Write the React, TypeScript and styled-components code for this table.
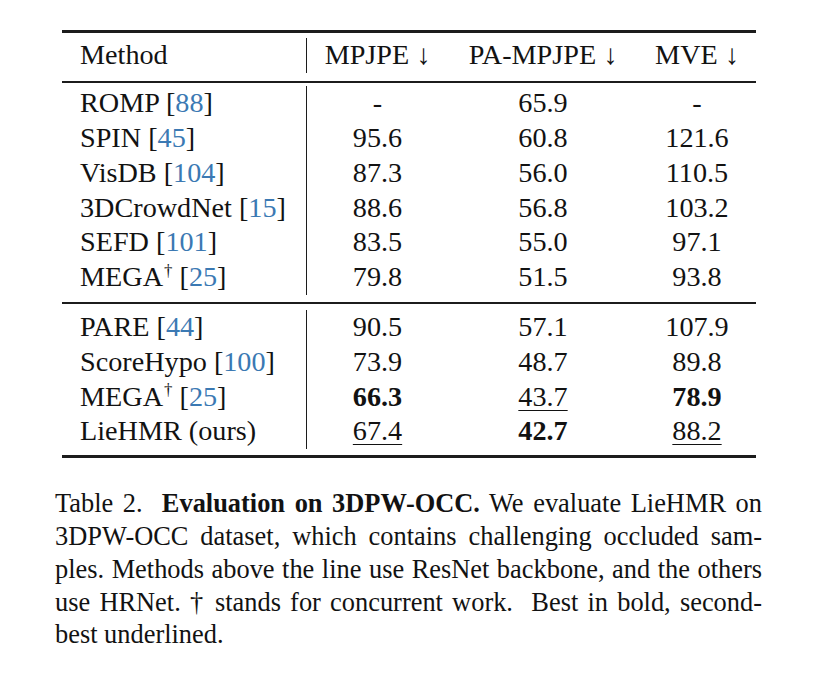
import React from "react";
import styled, { createGlobalStyle } from "styled-components";

const serif = `"Liberation Serif", "Times New Roman", Times, "DejaVu Serif", serif`;

const Global = createGlobalStyle`
  html, body { margin: 0; padding: 0; background: #ffffff; }
  body { font-family: ${serif}; color: #121212; }
`;

const Page = styled.div`
  width: 824px;
  height: 681px;
  padding-top: 30px;
  box-sizing: border-box;
  display: flex;
  flex-direction: column;
  font-family: ${serif};
`;

const Table = styled.div`
  margin-left: 62px;
  width: 694px;
  display: flex;
  flex-direction: column;
  font-size: 28.2px;
  line-height: 34.8px;
`;

const Rule = styled.div<{ $weight: number }>`
  height: ${(p) => p.$weight}px;
  background: #1c1c1c;
`;

const Section = styled.div<{ $top: number; $bottom: number }>`
  padding-top: ${(p) => p.$top}px;
  padding-bottom: ${(p) => p.$bottom}px;
`;

const Row = styled.div`
  display: grid;
  grid-template-columns: 244px 142px 190px 118px;
`;

const Cell = styled.div<{ $first?: boolean; $divider?: boolean }>`
  white-space: nowrap;
  text-align: ${(p) => (p.$first ? "left" : "center")};
  padding-left: ${(p) => (p.$first ? "18px" : "0")};
  border-left: ${(p) => (p.$divider ? "1.2px solid #1c1c1c" : "none")};
  box-sizing: border-box;
`;

const Cite = styled.span`
  color: #3b79b3;
`;

const Dagger = styled.sup`
  font-size: 0.6em;
  line-height: 0;
  vertical-align: 0.62em;
  margin-left: 1px;
`;

const Best = styled.span`
  font-weight: 700;
`;

const Second = styled.span`
  text-decoration: underline;
  text-decoration-thickness: 1.3px;
  text-underline-offset: 4px;
`;

const Caption = styled.div`
  margin-top: 29px;
  margin-left: 55px;
  width: 707px;
  font-size: 26.4px;
  line-height: 32.75px;
`;

const Line = styled.div<{ $last?: boolean }>`
  text-align: ${(p) => (p.$last ? "left" : "justify")};
  text-align-last: ${(p) => (p.$last ? "left" : "justify")};
  white-space: nowrap;
`;

const Strong = styled.b`
  font-weight: 700;
`;

type Val = { v: string; s?: "best" | "second" };
type RowData = { name: string; dagger?: boolean; cite: string; vals: Val[] };

const group1: RowData[] = [
  { name: "ROMP", cite: "88", vals: [{ v: "-" }, { v: "65.9" }, { v: "-" }] },
  { name: "SPIN", cite: "45", vals: [{ v: "95.6" }, { v: "60.8" }, { v: "121.6" }] },
  { name: "VisDB", cite: "104", vals: [{ v: "87.3" }, { v: "56.0" }, { v: "110.5" }] },
  { name: "3DCrowdNet", cite: "15", vals: [{ v: "88.6" }, { v: "56.8" }, { v: "103.2" }] },
  { name: "SEFD", cite: "101", vals: [{ v: "83.5" }, { v: "55.0" }, { v: "97.1" }] },
  { name: "MEGA", dagger: true, cite: "25", vals: [{ v: "79.8" }, { v: "51.5" }, { v: "93.8" }] },
];

const group2: RowData[] = [
  { name: "PARE", cite: "44", vals: [{ v: "90.5" }, { v: "57.1" }, { v: "107.9" }] },
  { name: "ScoreHypo", cite: "100", vals: [{ v: "73.9" }, { v: "48.7" }, { v: "89.8" }] },
  {
    name: "MEGA",
    dagger: true,
    cite: "25",
    vals: [{ v: "66.3", s: "best" }, { v: "43.7", s: "second" }, { v: "78.9", s: "best" }],
  },
  {
    name: "LieHMR (ours)",
    cite: "",
    vals: [{ v: "67.4", s: "second" }, { v: "42.7", s: "best" }, { v: "88.2", s: "second" }],
  },
];

const renderVal = (val: Val) => {
  if (val.s === "best") return <Best>{val.v}</Best>;
  if (val.s === "second") return <Second>{val.v}</Second>;
  return val.v;
};

const DataRow = ({ r }: { r: RowData }) => (
  <Row>
    <Cell $first>
      {r.name}
      {r.dagger && <Dagger>†</Dagger>}
      {r.cite && (
        <>
          {" "}[<Cite>{r.cite}</Cite>]
        </>
      )}
    </Cell>
    {r.vals.map((val, i) => (
      <Cell key={i} $divider={i === 0}>
        {renderVal(val)}
      </Cell>
    ))}
  </Row>
);

export default function App() {
  return (
    <>
      <Global />
      <Page>
        <Table>
          <Rule $weight={3} />
          <Section $top={5} $bottom={8}>
            <Row>
              <Cell $first>Method</Cell>
              <Cell $divider>MPJPE ↓</Cell>
              <Cell>PA-MPJPE ↓</Cell>
              <Cell>MVE ↓</Cell>
            </Row>
          </Section>
          <Rule $weight={2} />
          <Section $top={3.5} $bottom={7}>
            {group1.map((r, i) => (
              <DataRow key={i} r={r} />
            ))}
          </Section>
          <Rule $weight={2} />
          <Section $top={6} $bottom={6}>
            {group2.map((r, i) => (
              <DataRow key={i} r={r} />
            ))}
          </Section>
          <Rule $weight={3} />
        </Table>
        <Caption>
          <Line>
            Table 2.&nbsp; <Strong>Evaluation on 3DPW-OCC.</Strong> We evaluate LieHMR on
          </Line>
          <Line>3DPW-OCC dataset, which contains challenging occluded sam-</Line>
          <Line>ples. Methods above the line use ResNet backbone, and the others</Line>
          <Line>use HRNet. † stands for concurrent work.&nbsp; Best in bold, second-</Line>
          <Line $last>best underlined.</Line>
        </Caption>
      </Page>
    </>
  );
}
